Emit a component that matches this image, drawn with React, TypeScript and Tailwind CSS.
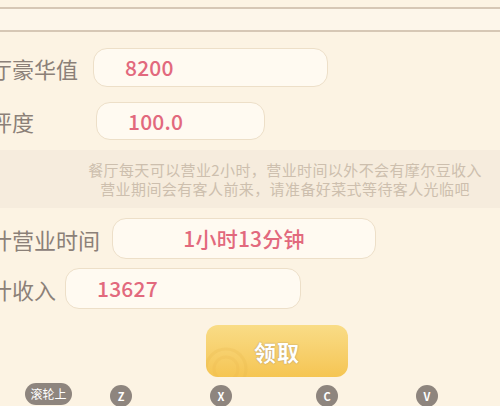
import React from "react";

const font = { fontFamily: '"Noto Sans CJK SC", "Noto Sans", sans-serif' };

function Row({
  label,
  labelW,
  boxW,
  boxH,
  value,
  center,
  mt,
}: {
  label: string;
  labelW: string;
  boxW: string;
  boxH: string;
  value: string;
  center?: boolean;
  mt: string;
}) {
  return (
    <div className={`flex items-center ml-[-32px] ${mt}`}>
      <div className={`${labelW} shrink-0 whitespace-nowrap text-[22px] leading-none text-[#8b8078]`}>{label}</div>
      <div
        className={`${boxW} ${boxH} shrink-0 rounded-[14px] border border-[#eddfc8] bg-[#fffaf1] flex items-center ${
          center ? "justify-center" : "pl-[31px]"
        }`}
      >
        <span className="text-[21px] font-medium leading-none text-[#e2697d] tracking-[0.2px]">{value}</span>
      </div>
    </div>
  );
}

export default function App() {
  return (
    <div className="w-[500px] h-[406px] overflow-hidden bg-[#fcf3e3] flex flex-col" style={font}>
      <div className="h-[7px] shrink-0" />
      <div className="h-[2px] shrink-0 bg-[#d6c7b5]" />
      <div className="h-[21px] shrink-0 bg-[#fdf6ea]" />
      <div className="h-[2px] shrink-0 bg-[#d6c7b5]" />

      <Row label="餐厅豪华值" labelW="w-[125px]" boxW="w-[235px]" boxH="h-[39px]" value="8200" mt="mt-[16px]" />
      <Row label="好评度" labelW="w-[128px]" boxW="w-[169px]" boxH="h-[38px]" value="100.0" mt="mt-[15px]" />

      <div className="mt-[10px] h-[58px] shrink-0 bg-[#f6ecdd] flex flex-col items-center justify-center pl-[70px] text-[15px] leading-[19px] tracking-[0.4px] text-[#cdbfae]">
        <div className="whitespace-nowrap">餐厅每天可以营业2小时，营业时间以外不会有摩尔豆收入</div>
        <div className="whitespace-nowrap">营业期间会有客人前来，请准备好菜式等待客人光临吧</div>
      </div>

      <Row label="累计营业时间" labelW="w-[144px]" boxW="w-[264px]" boxH="h-[41px]" value="1小时13分钟" center mt="mt-[10px]" />
      <Row label="累计收入" labelW="w-[97px]" boxW="w-[236px]" boxH="h-[41px]" value="13627" mt="mt-[9px]" />

      <div className="mt-[16px] pl-[206px] shrink-0">
        <div className="relative w-[142px] h-[52px] rounded-[12px] overflow-hidden bg-gradient-to-b from-[#f9dc86] to-[#f5c552] flex items-center justify-center">
          <svg className="absolute left-[-4px] top-[14px]" width="56" height="56" viewBox="0 0 56 56">
            <circle cx="24" cy="30" r="20" fill="none" stroke="#e9b64a" strokeOpacity="0.25" strokeWidth="3" />
            <circle cx="24" cy="30" r="12" fill="none" stroke="#e9b64a" strokeOpacity="0.2" strokeWidth="3" />
          </svg>
          <span
            className="relative text-[22px] font-bold leading-none text-white tracking-[1px]"
            style={{ textShadow: "0 0 1.5px #a0825a" }}
          >
            领取
          </span>
        </div>
      </div>

      <div className="mt-[6px] flex items-start pl-[25px] shrink-0">
        <div className="w-[47px] h-[22px] rounded-full bg-[#8e857e] flex items-center justify-center text-[12px] leading-none text-white">
          滚轮上
        </div>
        <div className="ml-[38px] mt-[2px] w-[22px] h-[22px] rounded-full bg-[#8e857e] flex items-center justify-center text-[11px] font-bold text-white">Z</div>
        <div className="ml-[78px] mt-[2px] w-[22px] h-[22px] rounded-full bg-[#8e857e] flex items-center justify-center text-[11px] font-bold text-white">X</div>
        <div className="ml-[84px] mt-[2px] w-[22px] h-[22px] rounded-full bg-[#8e857e] flex items-center justify-center text-[11px] font-bold text-white">C</div>
        <div className="ml-[78px] mt-[2px] w-[22px] h-[22px] rounded-full bg-[#8e857e] flex items-center justify-center text-[11px] font-bold text-white">V</div>
      </div>
    </div>
  );
}
